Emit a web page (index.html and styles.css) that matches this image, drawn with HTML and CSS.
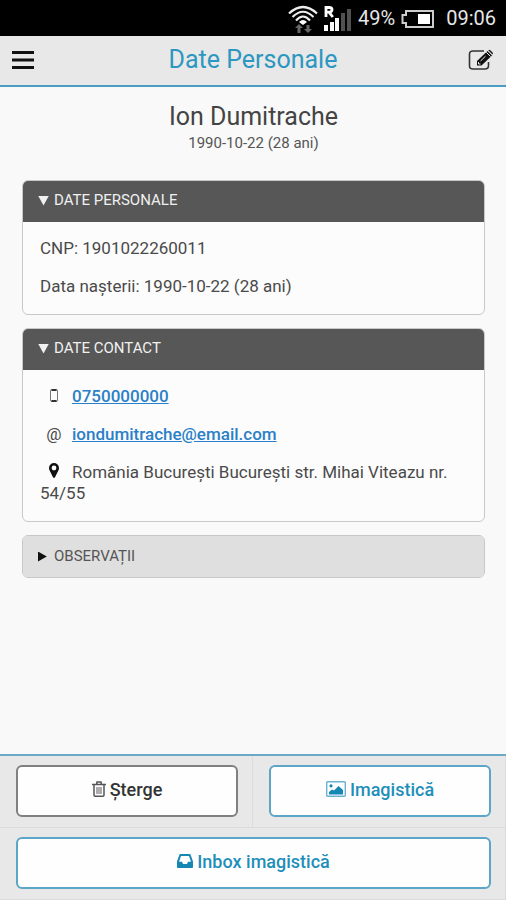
FILE: index.html
```html
<!DOCTYPE html>
<html lang="ro">
<head>
<meta charset="utf-8">
<meta name="viewport" content="width=device-width, initial-scale=1">
<title>Date Personale</title>
<link rel="stylesheet" href="styles.css">
</head>
<body>
<div class="status">
  <svg class="status-wifi" viewBox="0 0 30 30" aria-hidden="true">
    <g fill="none" stroke="#eee" stroke-width="2.200">
      <path d="M1 9.500Q15-3.500 29 9.500"/>
      <path d="M4.500 13Q15 2.500 25.500 13"/>
      <path d="M8 16.500Q15 8.500 22 16.500"/>
    </g>
    <path fill="#fff" d="M11 18Q15 14 19 18L15 21z"/>
    <path fill="#666" d="M11 20l4 4h-2.500v5h-3v-5H7zM20 29l-4-4h2.500v-4h3v4H24z"/>
  </svg>
  <svg class="status-signal" viewBox="0 0 28 28" aria-hidden="true">
    <path fill="none" stroke="#fff" stroke-width="2.800" d="M2 12V2.500h3.300q2.700 0 2.700 2.300T5.300 7.100H2M5 7.100L8.800 12"/>
    <path fill="#fff" d="M0 20h4v6H0zM6 17h4v9H6zM11 13h4v13h-4z"/>
    <path fill="#505050" d="M17 8h4v18h-4zM23 4h4v22h-4z"/>
  </svg>
  <span>49%</span>
  <svg class="status-battery" viewBox="0 0 33 18" aria-hidden="true">
    <path fill="none" stroke="#ccc" stroke-width="2" d="M5 1h27v16H5v-4H1.500V5H5z"/>
    <path fill="#fff" d="M17 4h12v10H17z"/>
  </svg>
  <span>09:06</span>
</div>
<header class="topbar">
  <button class="icon-button" type="button" aria-label="Meniu">
    <svg class="icon-menu" viewBox="0 0 22 18" aria-hidden="true"><path fill="#111" d="M0 0h22v3H0zM0 7.500h22v3H0zM0 15h22v3H0z"/></svg>
  </button>
  <h1 class="title">Date Personale</h1>
  <button class="icon-button" type="button" aria-label="Editare">
    <svg class="icon-edit" viewBox="0 0 26 22" aria-hidden="true">
      <path fill="none" stroke="#333" stroke-width="1.600" d="M16 2H5Q1.500 2 1.500 5v12Q1.500 20 5 20h12q3.500 0 3.500-3.500V13"/>
      <path fill="#111" d="M9 16.500v-4.500L19.500 2l4.500 4.500L13.500 16.500z"/>
      <path fill="#111" d="M20.300 1.200q1-1 2 0l2.200 2.200q1 1 0 2z"/>
      <path stroke="#e8e8e8" stroke-width="1" fill="none" d="M18.200 3.200l4.300 4.300M12.500 12l5-4.800M10.500 13v2h2"/>
    </svg>
  </button>
</header>
<main class="content">
  <div class="person">
    <h2 class="person-name">Ion Dumitrache</h2>
    <p class="person-birth">1990-10-22 (28 ani)</p>
  </div>
  <details class="panel" open>
    <summary class="panel-head"><span class="caret"></span>DATE PERSONALE</summary>
    <div class="panel-body">
      <p>CNP: 1901022260011</p>
      <p>Data nașterii: 1990-10-22 (28 ani)</p>
    </div>
  </details>
  <details class="panel" open>
    <summary class="panel-head"><span class="caret"></span>DATE CONTACT</summary>
    <div class="panel-body">
      <p><span class="lead"><svg class="icon-phone" viewBox="0 0 10 13" aria-hidden="true"><rect x="1.500" y=".5" width="7" height="12" rx="1.500" fill="none" stroke="#777" stroke-width="1"/><path fill="#333" d="M2.500 0h5v2h-5zM2.500 11h5v2h-5z"/></svg></span><a href="tel:0750000000">0750000000</a></p>
      <p><span class="lead">@</span><a href="mailto:iondumitrache@email.com">iondumitrache@email.com</a></p>
      <p><span class="lead"><svg class="icon-pin" viewBox="0 0 10 15" aria-hidden="true"><path fill="#111" fill-rule="evenodd" d="M5 0a5 5 0 0 1 5 5q0 1.300-.5 2.300L6 14.300q-1 1.400-2 0L.5 7.300Q0 6.300 0 5a5 5 0 0 1 5-5zm0 2.600a2.400 2.400 0 1 0 0 4.800 2.400 2.400 0 0 0 0-4.800z"/></svg></span>România București București str. Mihai Viteazu nr. 54/55</p>
    </div>
  </details>
  <details class="panel panel-closed">
    <summary class="panel-head"><span class="caret"></span>OBSERVAȚII</summary>
  </details>
</main>
<footer class="actions">
  <div class="cell">
    <button class="action action-dark" type="button">
      <svg class="icon-trash" viewBox="0 0 14 16" aria-hidden="true"><path fill="none" stroke="#555" stroke-width="1.500" d="M0 3.500h14M4.500 3.500L5 1h4l.5 2.500M2 3.500V14q0 1.200 1.200 1.200h7.600Q12 15.200 12 14V3.500"/><path fill="none" stroke="#777" stroke-width="1.200" d="M5 6v7M7 6v7M9 6v7"/></svg>
      Șterge
    </button>
  </div>
  <div class="cell">
    <button class="action" type="button">
      <svg class="icon-image" viewBox="0 0 20 16" aria-hidden="true"><rect x=".7" y=".7" width="18.600" height="14.600" rx="1" fill="none" stroke="#6ab2cf" stroke-width="1.400"/><circle cx="5" cy="4.800" r="1.600" fill="#1587b3"/><path fill="#1587b3" d="M3 13.500v-2.500l3-2.500 2 1L12.500 5l4.500 4v4.500z"/></svg>
      Imagistică
    </button>
  </div>
  <div class="cell cell-wide">
    <button class="action" type="button">
      <svg class="icon-inbox" viewBox="0 0 16 14" aria-hidden="true"><path fill="#1587b3" fill-rule="evenodd" d="M3.500 0h9q.8 0 1.100.8L16 7.500V13q0 1-1 1H1q-1 0-1-1V7.500L2.400.8Q2.700 0 3.500 0zM4 2L2 7.800h3L6 10h4l1-2.200h3L12 2z"/></svg>
      Inbox imagistică
    </button>
  </div>
</footer>
</body>
</html>
```
FILE: styles.css
```css
* {
  box-sizing: border-box;
}

body {
  margin: 0;
  min-height: 100vh;
  display: flex;
  flex-direction: column;
  background: #f9f9f9;
  color: #333;
  font-family: Roboto, "Liberation Sans", sans-serif;
  font-size: 17px;
  line-height: 21px;
}

h1, h2, p {
  margin: 0;
  font-weight: 400;
}

button {
  font: inherit;
  cursor: pointer;
}

svg {
  flex: none;
}

.status {
  display: flex;
  align-items: center;
  justify-content: flex-end;
  height: 36px;
  padding: 1px 10px 0 0;
  gap: 6px;
  background: #000;
  color: #e6e6e6;
  font-size: 20px;
}

.status-wifi {
  width: 30px;
  height: 30px;
}

.status-signal {
  width: 28px;
  height: 28px;
}

.status-battery {
  width: 33px;
  height: 18px;
  margin-right: 6px;
}

.topbar {
  display: flex;
  align-items: center;
  justify-content: space-between;
  height: 51px;
  padding: 0 12px 2px;
  background: #e8e8e8;
  border-bottom: 2px solid #4a9cc0;
}

.title {
  color: #2c97c0;
  font-size: 25px;
  line-height: 32px;
}

.icon-button {
  display: flex;
  width: 26px;
  padding: 0;
  border: 0;
  background: none;
}

.icon-menu {
  width: 22px;
  height: 18px;
}

.icon-edit {
  width: 26px;
  height: 22px;
}

.content {
  flex: 1;
  display: flex;
  flex-direction: column;
  gap: 13px;
  padding: 14px 21px 14px 22px;
}

.person {
  margin-bottom: 13px;
  text-align: center;
}

.person-name {
  font-size: 25px;
  line-height: 32px;
  color: #444;
}

.person-birth {
  color: #555;
  font-size: 15px;
}

.panel {
  border: 1px solid #c8c8c8;
  border-radius: 6px;
  background: #fcfcfc;
  overflow: hidden;
}

.panel-head {
  display: flex;
  align-items: center;
  gap: 5px;
  height: 41px;
  padding: 0 15px 2px;
  background: #575757;
  color: #f0f0f0;
  font-size: 15px;
  list-style: none;
  cursor: pointer;
}

.caret {
  width: 11px;
  height: 10px;
  background: currentColor;
  clip-path: polygon(0 0, 100% 0, 50% 100%);
}

.panel-closed .panel-head {
  padding-bottom: 0;
  background: #dfdfdf;
  color: #555;
}

.panel-closed .caret {
  background: #111;
  clip-path: polygon(0 0, 80% 50%, 0 100%);
}

.panel-body {
  display: flex;
  flex-direction: column;
  gap: 17px;
  padding: 16px 17px 17px;
  color: #4a4a4a;
}

.panel-body a {
  color: #2a80c8;
  font-weight: 500;
}

.lead {
  display: inline-flex;
  justify-content: center;
  width: 28px;
  margin-right: 4px;
}

.icon-phone {
  width: 10px;
  height: 13px;
}

.icon-pin {
  width: 10px;
  height: 15px;
}

.actions {
  display: grid;
  grid-template-columns: 1fr 1fr;
  background: #e8e8e8;
  border-top: 2px solid #6aaac8;
}

.cell {
  padding: 9px 14px 10px 16px;
  border-bottom: 1px solid #dcdcdc;
  border-right: 1px solid #dcdcdc;
}

.cell-wide {
  grid-column: 1 / -1;
}

.action {
  display: flex;
  align-items: center;
  justify-content: center;
  gap: 4px;
  width: 100%;
  height: 52px;
  padding: 0 6px 4px;
  border: 2px solid #5ba5c6;
  border-radius: 6px;
  background: #fefefe;
  color: #1f8fba;
  font-size: 18px;
  font-weight: 500;
}

.action-dark {
  border-color: #808080;
  color: #333;
}

.icon-trash {
  width: 14px;
  height: 16px;
}

.icon-image {
  width: 20px;
  height: 16px;
}

.icon-inbox {
  width: 16px;
  height: 14px;
}
```
